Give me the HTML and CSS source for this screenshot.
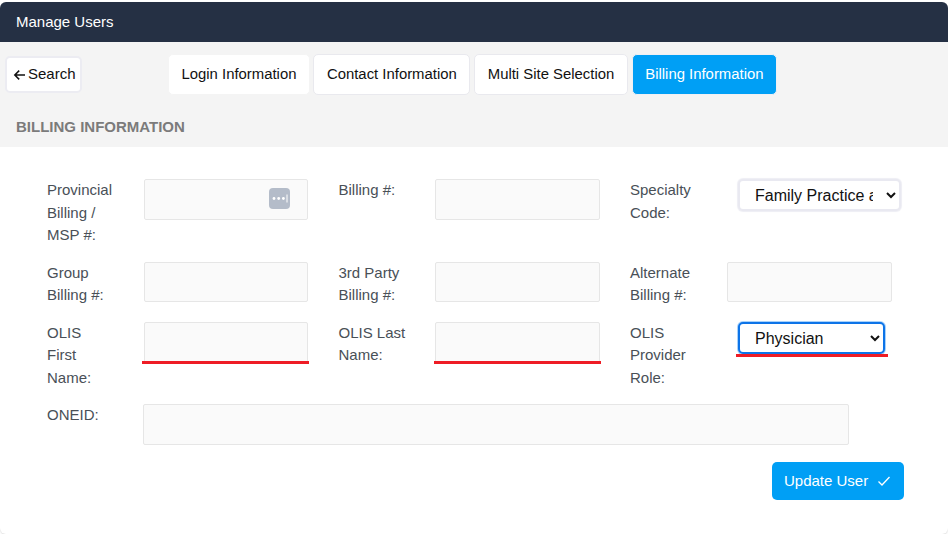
FILE: index.html
```html
<!DOCTYPE html>
<html lang="en">
<head>
<meta charset="utf-8">
<title>Manage Users</title>
<link rel="stylesheet" href="styles.css">
</head>
<body>
<div class="panel">
  <header class="title-bar">Manage Users</header>
  <div class="toolbar">
    <div class="nav-row">
      <button class="back-btn" type="button">
        <svg class="back-icon" viewBox="0 0 12 12" width="12" height="12" aria-hidden="true"><path d="M12 6H2M6.2 1.6 1.8 6l4.4 4.4" fill="none" stroke="#111" stroke-width="1.5"/></svg>Search
      </button>
      <div class="tabs">
        <button class="tab tab-plain" type="button">Login Information</button>
        <button class="tab" type="button">Contact Information</button>
        <button class="tab tab-multi" type="button">Multi Site Selection</button>
        <button class="tab tab-active" type="button">Billing Information</button>
      </div>
    </div>
    <h2 class="section-title">BILLING INFORMATION</h2>
  </div>
  <form class="form">
    <div class="row row-first">
      <div class="field">
        <label class="label">Provincial Billing / MSP #:</label>
        <div class="input-wrap">
          <input class="input" type="text">
          <span class="pw-badge"><svg viewBox="0 0 21 21" width="21" height="21" aria-hidden="true"><circle cx="5" cy="10.5" r="1.4" fill="#fff"/><circle cx="9.7" cy="10.5" r="1.4" fill="#fff"/><circle cx="14.4" cy="10.5" r="1.4" fill="#fff"/><path d="M18 6.5v8" stroke="#fff" stroke-width="1"/></svg></span>
        </div>
      </div>
      <div class="field">
        <label class="label">Billing #:</label>
        <div class="input-wrap"><input class="input" type="text"></div>
      </div>
      <div class="field">
        <label class="label label-specialty">Specialty Code:</label>
        <select class="select select-specialty"><option>Family Practice and Practice in General</option></select>
      </div>
    </div>
    <div class="row row-short">
      <div class="field">
        <label class="label">Group Billing #:</label>
        <div class="input-wrap"><input class="input" type="text"></div>
      </div>
      <div class="field">
        <label class="label">3rd Party Billing #:</label>
        <div class="input-wrap"><input class="input" type="text"></div>
      </div>
      <div class="field">
        <label class="label">Alternate Billing #:</label>
        <div class="input-wrap"><input class="input" type="text"></div>
      </div>
    </div>
    <div class="row row-olis">
      <div class="field">
        <label class="label">OLIS First Name:</label>
        <div class="input-wrap required"><input class="input" type="text"></div>
      </div>
      <div class="field">
        <label class="label">OLIS Last Name:</label>
        <div class="input-wrap required"><input class="input" type="text"></div>
      </div>
      <div class="field">
        <label class="label label-specialty">OLIS Provider Role:</label>
        <div class="select-wrap required">
          <select class="select select-role"><option>Physician</option></select>
        </div>
      </div>
    </div>
    <div class="row row-oneid">
      <label class="label label-oneid">ONEID:</label>
      <input class="input input-oneid" type="text">
    </div>
    <div class="actions">
      <button class="update-btn" type="button">Update User
        <svg viewBox="0 0 14 14" width="14" height="14" aria-hidden="true"><path d="M1.5 7.5 5 11l7.5-8" fill="none" stroke="#fff" stroke-width="1.3"/></svg>
      </button>
    </div>
  </form>
</div>
</body>
</html>
```

FILE: styles.css
```css
* { box-sizing: border-box; }
html, body { margin: 0; padding: 0; background: #fff; }
body {
  font-family: "Liberation Sans", Arial, sans-serif;
  font-size: 15px;
  line-height: 22.5px;
  color: #495057;
  padding-top: 2px;
}
.panel {
  height: 532px;
  border-radius: 6px;
  overflow: hidden;
  box-shadow: 0 1px 2px rgba(0, 0, 0, 0.14);
  background: #fff;
}
.title-bar {
  height: 40px;
  background: #253044;
  color: #fff;
  padding: 9px 16px;
}
.toolbar {
  height: 105px;
  background: #f4f4f4;
  padding: 12px 0 0 5px;
}
.nav-row { display: flex; align-items: flex-start; }
.back-btn {
  display: flex;
  align-items: center;
  height: 37px;
  width: 77px;
  margin-top: 2px;
  padding: 0 0 0 6px;
  background: #fff;
  border: 2px solid #ececf2;
  border-radius: 5px;
  font: inherit;
  color: #111;
}
.back-icon { margin-right: 3px; }
.tabs { display: flex; gap: 3.5px; margin-left: 86px; }
.tab {
  height: 41px;
  padding: 0 12.5px;
  background: #fff;
  border: 1px solid #e9e9ee;
  border-radius: 5px;
  font: inherit;
  font-size: 14.88px;
  color: #111;
}
.tab-plain { border-color: #f4f4f4; }
.tab-multi { padding: 0 13px; }
.tab-active {
  background: #009ff5;
  border-color: #f0f0f4;
  color: #fff;
  padding: 0 12px;
  margin-left: 0.5px;
}
.section-title {
  margin: 21px 0 0 11px;
  font-size: 15px;
  font-weight: 700;
  line-height: 22px;
  color: #7b7b7b;
}
.form { padding: 32px 44px 0 47px; }
.row { display: flex; }
.row-first { height: 82.8px; }
.row-short { height: 59.9px; }
.row-olis { height: 82.2px; }
.row-oneid { height: 58px; }
.field { display: flex; width: 291.5px; flex: none; align-items: flex-start; }
.label { width: 96.5px; flex: none; padding-right: 29.5px; }
.label-specialty { width: 108px; padding-right: 41px; }
.label-oneid { width: 96px; }
.input-wrap { position: relative; width: 164.8px; height: 41px; }
.field:last-child .input-wrap { width: 165.5px; }
.input {
  display: block;
  width: 100%;
  height: 100%;
  background: #fafafa;
  border: 1px solid #e6e6e6;
  border-radius: 2px;
  outline: none;
}
.row-short .input-wrap { height: 40px; }
.input-oneid { width: 706px; height: 41px; }
.pw-badge {
  position: absolute;
  right: 18px;
  top: 9px;
  width: 21px;
  height: 21px;
  border-radius: 4px;
  background: #b4bcc9;
  display: block;
}
.pw-badge svg { display: block; }
.required::after {
  content: "";
  position: absolute;
  left: -1.4px;
  right: -0.9px;
  bottom: -1px;
  height: 3px;
  background: #ee1c25;
}
.select-wrap { position: relative; width: 147px; height: 32px; margin-top: 0.6px; }
.select {
  display: block;
  height: 32px;
  padding: 0 10.5px 0 11px;
  font-family: "Liberation Sans", Arial, sans-serif;
  font-size: 16px;
  color: #111;
  background: #fff;
  border: 2px solid #e9e9f1;
  border-radius: 5px;
  outline: none;
}
.select-specialty { width: 163px; box-shadow: 0 0 1px 1px #eeeef4; }
.select-role {
  width: 147px;
  padding-right: 0;
  border-color: #0d74e8;
  box-shadow: 0 0 0 1px #a8d2fb;
}
.select-wrap.required::after { left: -2px; right: -3px; bottom: -3px; }
.actions { display: flex; justify-content: flex-end; }
.update-btn {
  display: flex;
  align-items: center;
  gap: 9px;
  width: 132px;
  height: 38px;
  padding: 0 0 0 12px;
  background: #009ff5;
  border: none;
  border-radius: 5px;
  font: inherit;
  color: #fff;
}
```
